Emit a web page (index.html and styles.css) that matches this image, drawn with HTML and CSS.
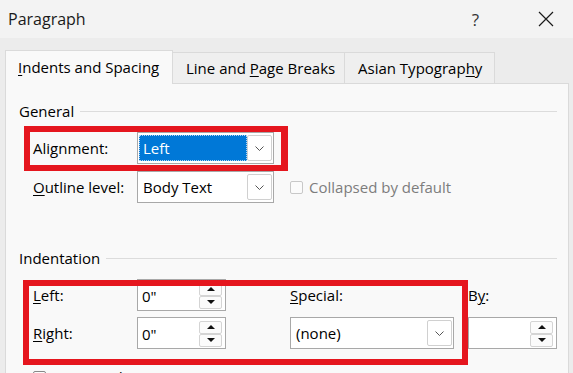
FILE: index.html
```html
<!DOCTYPE html>
<html>
<head>
<meta charset="utf-8">
<link rel="stylesheet" href="styles.css">
</head>
<body>
<div class="dialog">
  <div class="titlebar">
    <span class="title">Paragraph</span>
    <span class="help">?</span>
    <svg class="close" width="16" height="16" viewBox="0 0 16 16"><path d="M1 1 L15 15 M15 1 L1 15" stroke="#1a1a1a" stroke-width="1.2" fill="none"/></svg>
  </div>
  <div class="tabs">
    <div class="tab active"><span><u>I</u>ndents and Spacing</span></div>
    <div class="tab"><span>Line and <u>P</u>age Breaks</span></div>
    <div class="tab"><span>Asian Typograp<u>h</u>y</span></div>
  </div>
  <div class="panel">
    <div class="legend"><span>General</span><div class="rule"></div></div>
    <div class="form-row first">
      <label class="lbl">Alignment:</label>
      <div class="select">
        <span class="value selected">Left</span>
        <span class="dd"><svg width="9" height="5" viewBox="0 0 9 5"><path d="M0.5 0.5 L4.5 4.5 L8.5 0.5" stroke="#555" fill="none" stroke-width="1"/></svg></span>
      </div>
    </div>
    <div class="form-row">
      <label class="lbl"><u>O</u>utline level:</label>
      <div class="select">
        <span class="value">Body Text</span>
        <span class="dd"><svg width="9" height="5" viewBox="0 0 9 5"><path d="M0.5 0.5 L4.5 4.5 L8.5 0.5" stroke="#555" fill="none" stroke-width="1"/></svg></span>
      </div>
      <div class="check disabled"><span class="box"></span><span>Collapsed by default</span></div>
    </div>

    <div class="legend second"><span>Indentation</span><div class="rule"></div></div>
    <div class="indent-grid">
      <label class="lbl"><u>L</u>eft:</label>
      <div class="spin"><span class="value">0"</span><span class="btns"><span class="up"></span><span class="down"></span></span></div>
      <label class="lbl"><u>S</u>pecial:</label>
      <label class="lbl">B<u>y</u>:</label>

      <label class="lbl"><u>R</u>ight:</label>
      <div class="spin"><span class="value">0"</span><span class="btns"><span class="up"></span><span class="down"></span></span></div>
      <div class="select wide">
        <span class="value">(none)</span>
        <span class="dd"><svg width="9" height="5" viewBox="0 0 9 5"><path d="M0.5 0.5 L4.5 4.5 L8.5 0.5" stroke="#555" fill="none" stroke-width="1"/></svg></span>
      </div>
      <div class="spin"><span class="value"></span><span class="btns"><span class="up"></span><span class="down"></span></span></div>
    </div>
    <div class="check mirror"><span class="box"></span><span><u>M</u>irror indents</span></div>

    <div class="highlight hl-align"></div>
    <div class="highlight hl-indent"></div>
  </div>
</div>
</body>
</html>
```
FILE: styles.css
```css
* { box-sizing: border-box; }
html, body { margin: 0; padding: 0; }
body {
  width: 573px;
  height: 373px;
  overflow: hidden;
  background: #ececec;
  font-family: "Open Sans", "Noto Sans", sans-serif;
  font-size: 15px;
  color: #000;
}
u { text-decoration: underline; text-underline-offset: 2px; text-decoration-thickness: 1px; }
.dialog { width: 573px; height: 373px; }

.titlebar {
  height: 38px;
  background: #f3f3f3;
  display: flex;
  align-items: center;
  padding-left: 8px;
}
.title { font-size: 16px; color: #1a1a1a; flex: 1; }
.help { font-size: 17px; color: #333; margin-right: 59px; }
.close { margin-right: 19px; }

.tabs {
  display: flex;
  align-items: flex-end;
  padding-left: 5px;
  height: 46px;
  margin-top: -1px;
}
.tab {
  height: 31px;
  padding: 0 13px;
  display: flex;
  align-items: center;
  border: 1px solid #dadada;
  border-bottom: none;
  border-left: none;
  background: #efefef;
  color: #000;
  white-space: nowrap;
}
.tab.active {
  height: 34px;
  border-left: 1px solid #dadada;
  background: #f9f9f9;
  padding: 0 13px 2px 12px;
  width: 168px;
  position: relative;
  z-index: 1;
  margin-bottom: -1px;
}
.tab:nth-child(2) { width: 172px; }
.tab:nth-child(3) { width: 150px; }

.panel {
  position: relative;
  margin: 0 4px 0 5px;
  height: 300px;
  background: #f9f9f9;
  border: 1px solid #dadada;
  border-bottom: none;
  padding: 17px 11px 0 13px;
}
.legend {
  display: flex;
  align-items: center;
  height: 20px;
}
.legend .rule { flex: 1; height: 1px; background: #dcdcdc; margin-left: 6px; }
.legend.second { margin-top: 45px; }

.form-row {
  display: flex;
  align-items: center;
  padding-left: 14px;
  margin-top: 7px;
}
.form-row.first { margin-top: 11px; }
.lbl { width: 104px; white-space: nowrap; }

.select {
  position: relative;
  width: 137px;
  height: 32px;
  background: #fff;
  border: 1px solid #a8a8a8;
  display: flex;
  align-items: center;
  padding: 2px 1px 2px 1px;
}
.select.wide { width: 164px; }
.select .value {
  flex: 1;
  height: 100%;
  display: flex;
  align-items: center;
  padding-left: 4px;
}
.select .value.selected {
  background: #0078d7;
  color: #fff;
  outline: 1px dotted #b3d4f0;
  outline-offset: -1px;
}
.dd {
  width: 25px;
  height: 100%;
  border: 1px solid #d0d0d0;
  border-radius: 2px;
  background: #fff;
  display: flex;
  align-items: center;
  justify-content: center;
}

.check {
  display: flex;
  align-items: center;
  margin-left: 16px;
  white-space: nowrap;
}
.check .box {
  width: 13px;
  height: 13px;
  border: 1px solid #c8c8c8;
  border-radius: 2px;
  background: #fbfbfb;
  margin-right: 6px;
}
.check.disabled { color: #7d7d7d; }
.check.mirror { margin: 18px 0 0 14px; height: 20px; }
.check.mirror .box { border-color: #888; }

.indent-grid {
  display: grid;
  grid-template-columns: 104px 153px 178px 89px;
  grid-auto-rows: 32px;
  row-gap: 6px;
  align-items: center;
  padding-left: 14px;
  margin-top: 11px;
}
.spin {
  position: relative;
  width: 89px;
  height: 32px;
  background: #fff;
  border: 1px solid #a8a8a8;
  display: flex;
  align-items: center;
  padding: 3px 3px 2px 4px;
}
.spin .value { flex: 1; align-self: center; }
.spin .btns {
  display: flex;
  flex-direction: column;
  width: 23px;
  height: 26px;
}
.spin .up, .spin .down {
  flex: 1;
  border: 1px solid #d4d4d4;
  border-radius: 2px;
  background: #fbfbfb;
  position: relative;
}
.spin .up::after, .spin .down::after {
  content: "";
  position: absolute;
  left: 50%;
  top: 50%;
  margin-left: -4px;
  border-left: 4px solid transparent;
  border-right: 4px solid transparent;
}
.spin .up::after { margin-top: -2px; border-bottom: 4px solid #111; }
.spin .down::after { margin-top: -2px; border-top: 4px solid #111; }

.highlight {
  position: absolute;
  border: 6px solid #e5161e;
  pointer-events: none;
}
.hl-align { left: 18px; top: 42px; width: 264px; height: 45px; border-right-width: 7px; }
.hl-indent { left: 17px; top: 196px; width: 445px; height: 85px; }
```
